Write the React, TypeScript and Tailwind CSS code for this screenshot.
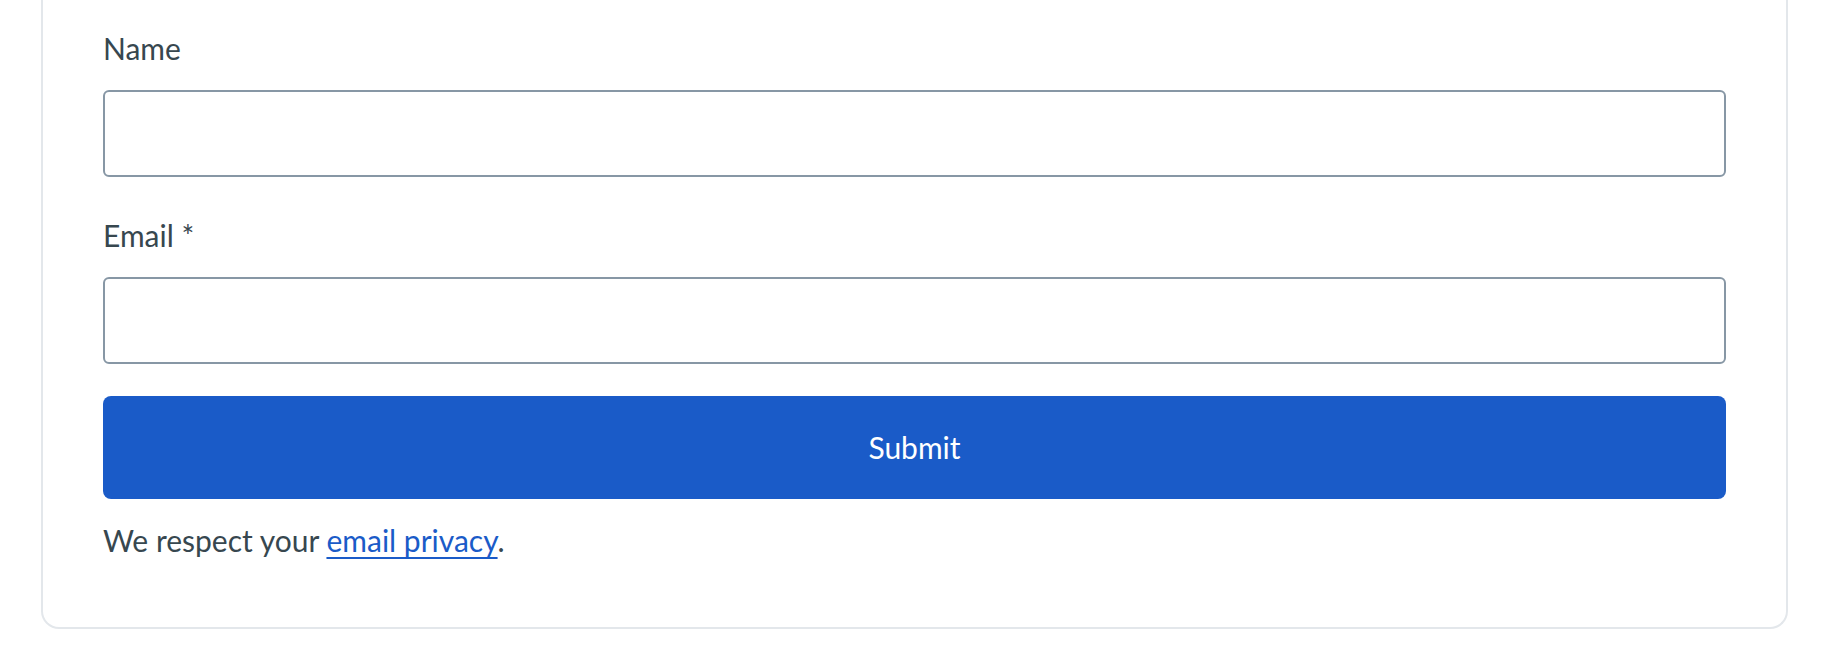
import React from "react";

export default function App() {
  return (
    <div className="min-h-[664px] w-full bg-white font-['Lato',_'Noto_Sans',_sans-serif] text-[#37474f]">
      <div className="ml-[41px] w-[1747px] rounded-b-[18px] border-2 border-t-0 border-[#e3e7eb] bg-white px-[60px] pt-[26px] pb-[65px]">
        <form className="flex flex-col" onSubmit={(e) => e.preventDefault()}>
          <label htmlFor="name" className="mb-[20px] block text-[30px] leading-[44px]">
            Name
          </label>
          <input
            id="name"
            type="text"
            className="h-[87px] w-full rounded-[6px] border-2 border-[#8797a5] bg-white px-4 text-[30px] outline-none"
          />

          <label htmlFor="email" className="mt-[36px] mb-[20px] block text-[30px] leading-[44px]">
            Email *
          </label>
          <input
            id="email"
            type="email"
            className="h-[87px] w-full rounded-[6px] border-2 border-[#8797a5] bg-white px-4 text-[30px] outline-none"
          />

          <button
            type="submit"
            className="mt-[32px] h-[103px] w-full rounded-[8px] bg-[#1a5bc8] text-[30px] text-white"
          >
            Submit
          </button>

          <p className="mt-[19px] text-[30px] leading-[44px]">
            We respect your{" "}
            <a href="#" className="text-[#1a5bc8] underline decoration-2 underline-offset-[5px]">
              email privacy
            </a>
            .
          </p>
        </form>
      </div>
    </div>
  );
}
